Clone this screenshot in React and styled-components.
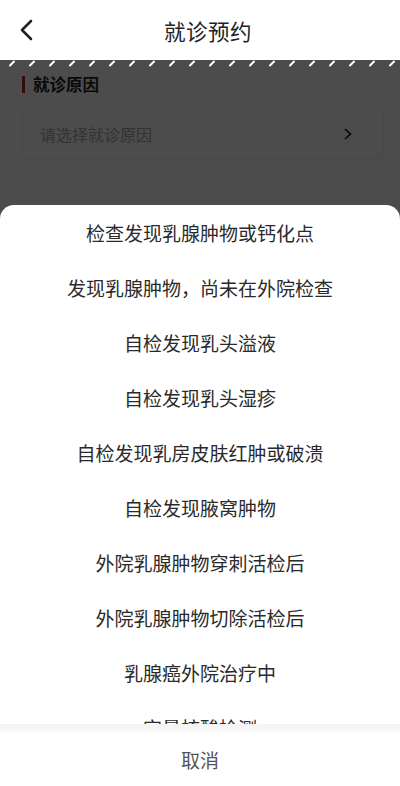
import styled, { createGlobalStyle } from "styled-components";

const GlobalStyle = createGlobalStyle`
  html, body {
    margin: 0;
    padding: 0;
    background: #fff;
    font-family: "Noto Sans CJK SC", "Noto Sans", sans-serif;
  }
  * { box-sizing: border-box; }
`;

const Page = styled.div`
  width: 400px;
  height: 786px;
  position: relative;
  overflow: hidden;
  background: #fff;
`;

const Header = styled.div`
  height: 60px;
  display: flex;
  align-items: center;
  justify-content: center;
  padding-left: 16px;
  position: relative;
`;

const Back = styled.div`
  position: absolute;
  left: 14px;
  top: 16px;
  width: 24px;
  height: 28px;
  display: flex;
  align-items: center;
  justify-content: center;
`;

const Title = styled.h1`
  margin: 0;
  font-size: 21.5px;
  font-weight: 400;
  color: #222;
  letter-spacing: 0.5px;
`;

const Body = styled.div`
  padding: 14px 16px 0 22px;
`;

const SectionTitle = styled.div`
  display: flex;
  align-items: center;
  gap: 8px;
  font-size: 16.5px;
  font-weight: 700;
  color: #222;
  height: 20px;
  &::before {
    content: "";
    width: 3px;
    height: 17px;
    background: #b3262b;
  }
`;

const Select = styled.div`
  margin-top: 14px;
  height: 52px;
  border: 1px solid #f0f0f0;
  border-radius: 4px;
  display: flex;
  align-items: center;
  justify-content: space-between;
  padding: 0 30px 0 17px;
  font-size: 16px;
  color: #aaa;
`;

const Overlay = styled.div`
  position: absolute;
  left: 0;
  right: 0;
  top: 60px;
  bottom: 0;
  background: rgba(0, 0, 0, 0.7);
`;

const Slashes = styled.svg`
  position: absolute;
  left: 0;
  top: 0;
  display: block;
`;

const Sheet = styled.div`
  position: absolute;
  left: 0;
  right: 0;
  bottom: 0;
  height: 581px;
  background: #fff;
  border-radius: 14px 14px 0 0;
  display: flex;
  flex-direction: column;
  overflow: hidden;
`;

const List = styled.div`
  height: 519px;
  overflow: hidden;
  display: flex;
  flex-direction: column;
`;

const Item = styled.div`
  flex: 0 0 55px;
  display: flex;
  align-items: center;
  justify-content: center;
  font-size: 19px;
  color: #2a2a2a;
`;

const Divider = styled.div`
  height: 8px;
  background: linear-gradient(#f3f3f3, #fafafa);
`;

const Cancel = styled.div`
  flex: 1;
  display: flex;
  align-items: center;
  justify-content: center;
  font-size: 19px;
  color: #555;
`;

const reasons = [
  "检查发现乳腺肿物或钙化点",
  "发现乳腺肿物，尚未在外院检查",
  "自检发现乳头溢液",
  "自检发现乳头湿疹",
  "自检发现乳房皮肤红肿或破溃",
  "自检发现腋窝肿物",
  "外院乳腺肿物穿刺活检后",
  "外院乳腺肿物切除活检后",
  "乳腺癌外院治疗中",
  "定量核酸检测",
];

export default function App() {
  return (
    <Page>
      <GlobalStyle />
      <Header>
        <Back>
          <svg width="14" height="22" viewBox="0 0 14 22">
            <path d="M12 2 L3 11 L12 20" fill="none" stroke="#222" strokeWidth="2.6" strokeLinecap="round" strokeLinejoin="round" />
          </svg>
        </Back>
        <Title>就诊预约</Title>
      </Header>
      <Body>
        <SectionTitle>就诊原因</SectionTitle>
        <Select>
          <span>请选择就诊原因</span>
          <svg width="10" height="14" viewBox="0 0 10 14">
            <path d="M2 2 L7.5 7 L2 12" fill="none" stroke="#111" strokeWidth="1.6" />
          </svg>
        </Select>
      </Body>
      <Overlay>
        <Slashes width="400" height="8">
          <defs>
            <pattern id="sl" width="20" height="8" patternUnits="userSpaceOnUse" x="7">
              <path d="M3 5.5 L7 1.5" stroke="#fff" strokeWidth="2" strokeLinecap="round" />
            </pattern>
          </defs>
          <rect width="400" height="8" fill="url(#sl)" />
        </Slashes>
        <Sheet>
          <List>
            {reasons.map((r) => (
              <Item key={r}>{r}</Item>
            ))}
          </List>
          <Divider />
          <Cancel>取消</Cancel>
        </Sheet>
      </Overlay>
    </Page>
  );
}
